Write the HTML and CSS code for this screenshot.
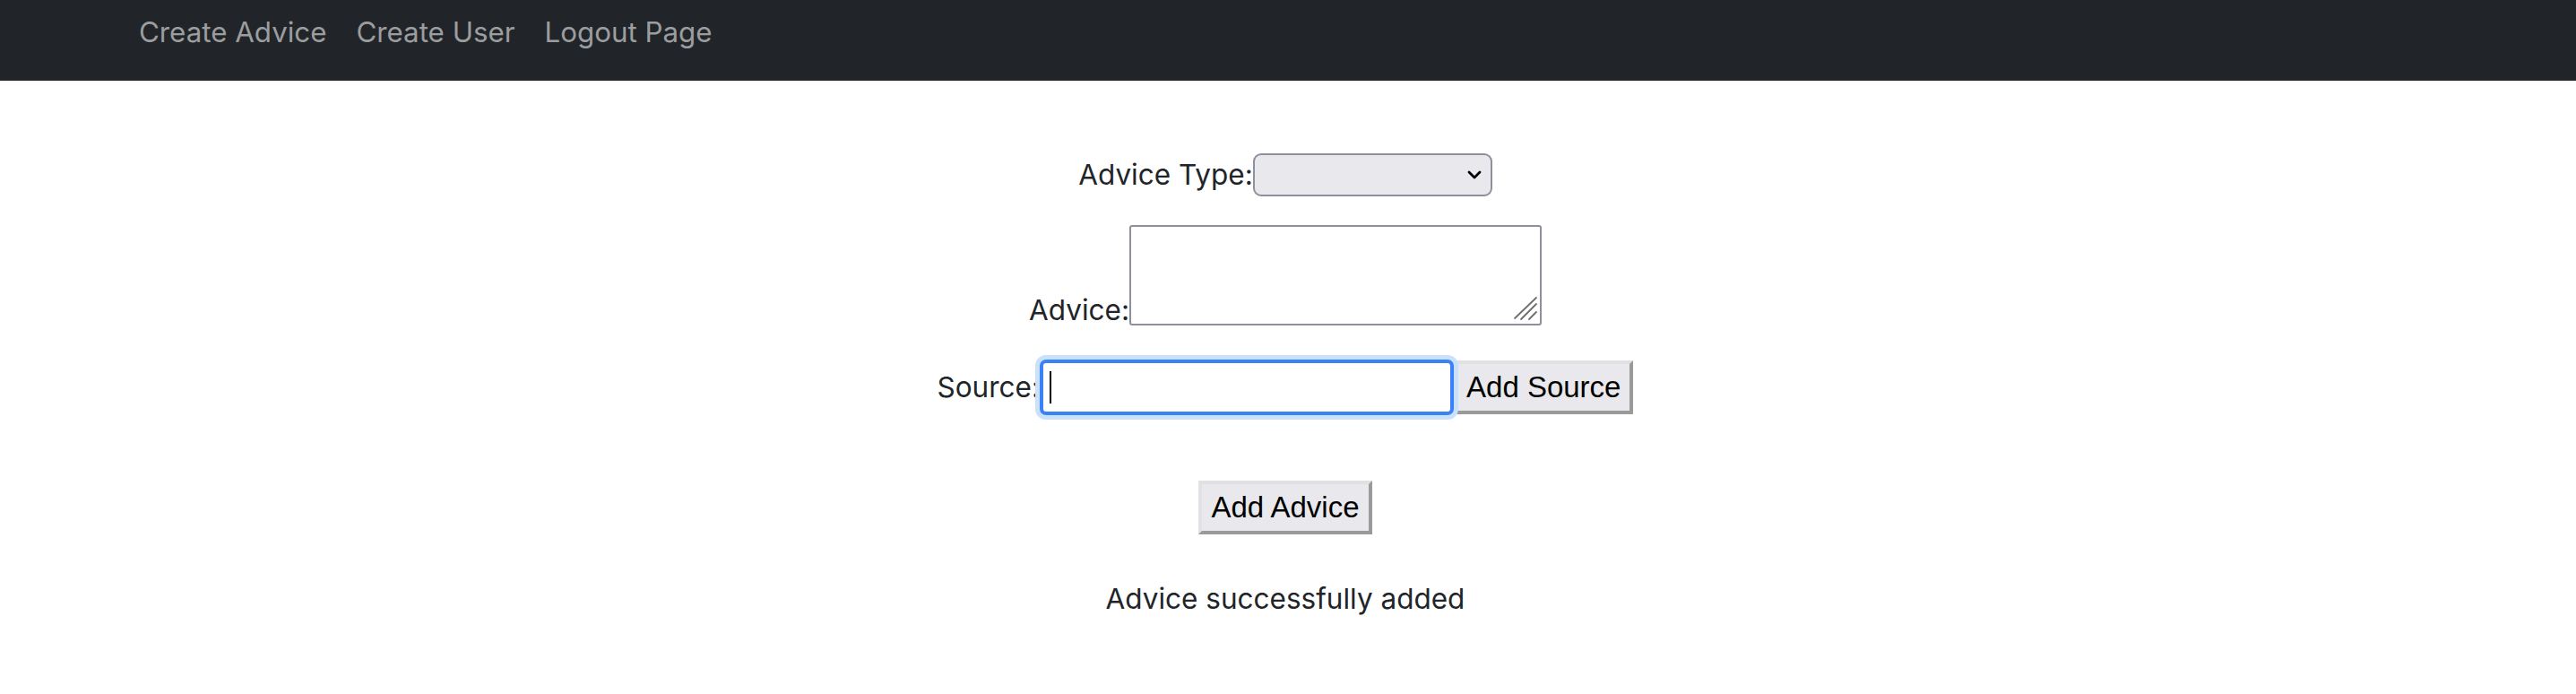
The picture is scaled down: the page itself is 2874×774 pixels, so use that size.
FILE: index.html
```html
<!DOCTYPE html>
<html lang="en">
<head>
<meta charset="utf-8">
<title>Create Advice</title>
<link rel="stylesheet" href="styles.css">
</head>
<body>
<nav class="navbar">
  <a class="nav-link" href="#">Create Advice</a>
  <a class="nav-link" href="#">Create User</a>
  <a class="nav-link" href="#">Logout Page</a>
</nav>
<main class="form">
  <div class="row row-type">
    <label class="label" for="type">Advice Type:</label>
    <span class="select-wrap">
      <select class="select" id="type"><option></option></select>
      <svg class="chevron" width="16" height="10" viewBox="0 0 16 10"><path d="M2 2 L8 8 L14 2" fill="none" stroke="#000" stroke-width="2.8" stroke-linecap="round" stroke-linejoin="round"/></svg>
    </span>
  </div>
  <div class="row row-advice">
    <label class="label label-bottom" for="advice">Advice:</label>
    <span class="textarea-wrap">
      <textarea class="textarea" id="advice"></textarea>
      <svg class="grip" width="28" height="28" viewBox="0 0 28 28"><path d="M2 25 L26 2 M9 26 L26 9 M18 26 L26 18" fill="none" stroke="#6e6e6e" stroke-width="1.8" stroke-linecap="round"/></svg>
    </span>
  </div>
  <div class="row row-source">
    <label class="label" for="source">Source:</label>
    <span class="input-wrap">
      <input class="input" id="source" type="text">
      <span class="caret"></span>
    </span>
    <button class="btn" type="button">Add Source</button>
  </div>
  <div class="row row-submit">
    <button class="btn" type="button">Add Advice</button>
  </div>
  <p class="message">Advice successfully added</p>
</main>
</body>
</html>
```
FILE: styles.css
```css
html, body {
  margin: 0;
  padding: 0;
  background: #fff;
}
body {
  font-family: Inter, "Noto Sans", sans-serif;
  font-size: 31.5px;
  color: #212529;
}
.navbar {
  height: 90px;
  background: #212529;
  display: flex;
  align-items: flex-start;
  gap: 33px;
  padding-left: 155px;
  box-sizing: border-box;
  padding-top: 17px;
}
.nav-link {
  color: #9b9d9f;
  text-decoration: none;
  font-size: 31.3px;
  line-height: 38px;
}
.form {
  display: flex;
  flex-direction: column;
  align-items: center;
  padding-top: 81px;
  padding-right: 6px;
}
.row {
  display: flex;
  justify-content: center;
  align-items: center;
}
.row-advice {
  align-items: flex-end;
  margin-top: 32px;
}
.row-source {
  margin-top: 38px;
}
.row-submit {
  margin-top: 73px;
}
.label {
  line-height: 38px;
}
.label-bottom {
  margin-bottom: -2px;
}
.select-wrap {
  position: relative;
  display: block;
}
.select {
  appearance: none;
  -webkit-appearance: none;
  display: block;
  width: 267px;
  height: 48px;
  box-sizing: border-box;
  background: #e9e8ed;
  border: 2px solid #8f8f9d;
  border-radius: 9px;
  margin: 0;
}
.chevron {
  position: absolute;
  right: 12px;
  top: 19px;
}
.textarea-wrap {
  position: relative;
  display: block;
}
.textarea {
  display: block;
  width: 460px;
  height: 112px;
  box-sizing: border-box;
  border: 2px solid #8f8f9d;
  border-radius: 3px;
  margin: 0;
  resize: none;
  background: #fff;
}
.grip {
  position: absolute;
  right: 4px;
  bottom: 5px;
}
.input-wrap {
  position: relative;
  display: block;
}
.input {
  display: block;
  width: 462px;
  height: 62px;
  box-sizing: border-box;
  border: 4px solid #3b82f6;
  border-radius: 7px;
  box-shadow: 0 0 0 5px #c9e1fb;
  outline: none;
  margin: 0;
  background: #fff;
}
.caret {
  position: absolute;
  left: 11px;
  top: 13px;
  width: 2px;
  height: 36px;
  background: #000;
}
.btn {
  font-family: "Liberation Sans", Arial, sans-serif;
  font-size: 33px;
  line-height: 38px;
  color: #000;
  background: #e9e9ed;
  border-style: solid;
  border-width: 4px;
  border-color: #e1e1e3 #9a9a9a #9a9a9a #e1e1e3;
  padding: 7px 10px;
  margin: 0;
  border-radius: 0;
}
.message {
  margin: 53px 0 0;
  line-height: 38px;
}
```
